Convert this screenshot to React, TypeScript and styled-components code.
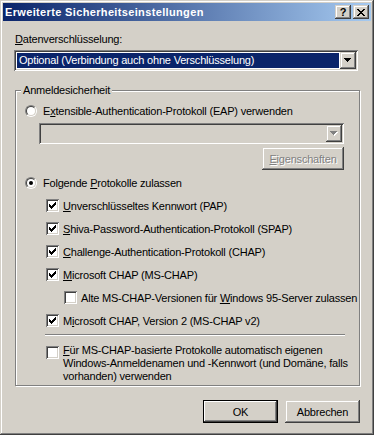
import React from "react";
import styled, { createGlobalStyle, css } from "styled-components";

const GlobalStyle = createGlobalStyle`
  html, body {
    margin: 0;
    padding: 0;
    background: #d4d0c8;
  }
  body {
    font-family: "Liberation Sans", Arial, sans-serif;
    font-size: 11px;
    letter-spacing: -0.2px;
    color: #000;
  }
  * { box-sizing: border-box; }
`;

const raised = css`
  box-shadow: inset -1px -1px #404040, inset 1px 1px #d4d0c8,
    inset -2px -2px #808080, inset 2px 2px #ffffff;
`;

const sunken = css`
  box-shadow: inset 1px 1px #808080, inset -1px -1px #ffffff,
    inset 2px 2px #404040, inset -2px -2px #d4d0c8;
`;

const Window = styled.div`
  width: 374px;
  height: 435px;
  padding: 3px;
  background: #d4d0c8;
  display: flex;
  flex-direction: column;
  ${raised}
`;

const TitleBar = styled.div`
  height: 18px;
  padding: 0 2px 0 2px;
  display: flex;
  align-items: center;
  justify-content: space-between;
  background: linear-gradient(to right, #0a246a, #a6caf0);
`;

const Title = styled.span`
  color: #fff;
  font-weight: bold;
  font-size: 11px;
  letter-spacing: 0.35px;
  white-space: nowrap;
`;

const CaptionButtons = styled.div`
  display: flex;
  gap: 2px;
`;

const CaptionButton = styled.div`
  width: 16px;
  height: 14px;
  background: #d4d0c8;
  display: flex;
  align-items: center;
  justify-content: center;
  font-weight: bold;
  font-size: 11px;
  line-height: 14px;
  letter-spacing: 0;
  ${raised}
`;

const Body = styled.div`
  flex: 1;
  padding: 12px 11px 0 12px;
  display: flex;
  flex-direction: column;
`;

const FieldLabel = styled.div`
  height: 13px;
  line-height: 13px;
  white-space: nowrap;
`;

const Combo = styled.div<{ $disabled?: boolean }>`
  height: 21px;
  padding: 2px;
  display: flex;
  background: ${({ $disabled }) => ($disabled ? "#d4d0c8" : "#fff")};
  ${sunken}
`;

const MainCombo = styled(Combo)`
  margin: 4px 2px 0 -1px;
`;

const ComboValue = styled.div<{ $selected?: boolean }>`
  flex: 1;
  margin: 1px;
  padding-left: 2px;
  line-height: 15px;
  white-space: nowrap;
  background: ${({ $selected }) => ($selected ? "#0a246a" : "transparent")};
  color: ${({ $selected }) => ($selected ? "#fff" : "#000")};
`;

const DropButton = styled.div`
  width: 16px;
  height: 17px;
  background: #d4d0c8;
  display: flex;
  align-items: center;
  justify-content: center;
  ${raised}
`;

const Group = styled.fieldset`
  margin: 13px 0 0 0;
  padding: 6px 9px 2px 9px;
  min-inline-size: 0;
  border: 1px solid #808080;
  box-shadow: inset 1px 1px #ffffff, 1px 1px #ffffff;
  display: flex;
  flex-direction: column;
`;

const Legend = styled.legend`
  margin-left: -4px;
  padding: 0 2px;
  line-height: 13px;
  background: #d4d0c8;
`;

const OptionRow = styled.label<{ $indent?: number; $height?: number; $gap?: number }>`
  height: ${({ $height }) => $height ?? 16}px;
  margin-left: ${({ $indent }) => $indent ?? 0}px;
  display: flex;
  align-items: center;
  gap: ${({ $gap }) => $gap ?? 6}px;
  white-space: nowrap;
`;

const RadioOuter = styled.span`
  width: 12px;
  height: 12px;
  flex: none;
  border-radius: 50%;
  border: 1px solid;
  border-color: #808080 #ffffff #ffffff #808080;
  display: flex;
`;

const RadioInner = styled.span`
  flex: 1;
  border-radius: 50%;
  border: 1px solid;
  border-color: #404040 #d4d0c8 #d4d0c8 #404040;
  background: #fff;
  display: flex;
  align-items: center;
  justify-content: center;
`;

const RadioDot = styled.span`
  width: 4px;
  height: 4px;
  border-radius: 50%;
  background: #000;
`;

const CheckBox = styled.span`
  width: 13px;
  height: 13px;
  flex: none;
  padding: 3px;
  background: #fff;
  display: flex;
  ${sunken}
`;

const EapOptions = styled.div`
  margin: 4px 0 0 14px;
  width: 305px;
  display: flex;
  flex-direction: column;
`;

const Button = styled.div<{ $default?: boolean; $disabled?: boolean }>`
  width: 75px;
  height: 23px;
  display: flex;
  align-items: center;
  justify-content: center;
  background: #d4d0c8;
  white-space: nowrap;
  ${raised}
  ${({ $default }) =>
    $default &&
    css`
      box-shadow: inset 1px 1px #000, inset -1px -1px #000,
        inset -2px -2px #404040, inset 2px 2px #ffffff,
        inset -3px -3px #808080;
    `}
  ${({ $disabled }) =>
    $disabled &&
    css`
      color: #808080;
      text-shadow: 1px 1px 0 #ffffff;
    `}
`;

const PropsButton = styled(Button)`
  width: 82px;
  margin-top: 3px;
  align-self: flex-end;
`;

const Spacer = styled.div<{ $h: number }>`
  height: ${({ $h }) => $h}px;
`;

const Separator = styled.div`
  margin: 2px 0 0 20px;
  width: 300px;
  height: 2px;
  border-top: 1px solid #808080;
  border-bottom: 1px solid #ffffff;
`;

const MultiRow = styled.label`
  margin: 8px 0 0 21px;
  display: flex;
  align-items: flex-start;
  gap: 4px;
`;

const MultiText = styled.span`
  line-height: 13px;
  white-space: nowrap;
`;

const CheckSlot = styled.span`
  margin-top: 2px;
  display: flex;
`;

const ButtonRow = styled.div`
  margin-top: 14px;
  display: flex;
  justify-content: flex-end;
  gap: 7px;
`;

const Arrow = ({ disabled }: { disabled?: boolean }) => (
  <svg width="8" height="5" viewBox="0 0 8 5" shapeRendering="crispEdges">
    {disabled && (
      <path
        d="M1 1h7v1H1z M2 2h5v1H2z M3 3h3v1H3z M4 4h1v1H4z"
        fill="#ffffff"
      />
    )}
    <path
      d="M0 0h7v1H0z M1 1h5v1H1z M2 2h3v1H2z M3 3h1v1H3z"
      fill={disabled ? "#808080" : "#000"}
    />
  </svg>
);

const CloseGlyph = () => (
  <svg width="8" height="7" viewBox="0 0 8 7" shapeRendering="crispEdges">
    <path
      d="M0 0h2v1H0z M6 0h2v1H6z M1 1h2v1H1z M5 1h2v1H5z M2 2h4v1H2z M3 3h2v1H3z M2 4h4v1H2z M1 5h2v1H1z M5 5h2v1H5z M0 6h2v1H0z M6 6h2v1H6z"
      fill="#000"
    />
  </svg>
);

const Check = ({ checked }: { checked: boolean }) => (
  <CheckBox>
    {checked && (
      <svg width="7" height="7" viewBox="0 0 7 7" shapeRendering="crispEdges">
        <path
          d="M0 2h1v3H0z M1 3h1v3H1z M2 4h1v3H2z M3 3h1v3H3z M4 2h1v3H4z M5 1h1v3H5z M6 0h1v3H6z"
          fill="#000"
        />
      </svg>
    )}
  </CheckBox>
);

const Radio = ({ checked }: { checked: boolean }) => (
  <RadioOuter>
    <RadioInner>{checked && <RadioDot />}</RadioInner>
  </RadioOuter>
);

const protocols = [
  { key: "pap", pre: "", acc: "U", post: "nverschlüsseltes Kennwort (PAP)", checked: true, indent: 21 },
  { key: "spap", pre: "", acc: "S", post: "hiva-Password-Authentication-Protokoll (SPAP)", checked: true, indent: 21 },
  { key: "chap", pre: "", acc: "C", post: "hallenge-Authentication-Protokoll (CHAP)", checked: true, indent: 21 },
  { key: "ms", pre: "", acc: "M", post: "icrosoft CHAP (MS-CHAP)", checked: true, indent: 21 },
  { key: "old", pre: "Alte MS-CHAP-Versionen für ", acc: "W", post: "indows 95-Server zulassen", checked: false, indent: 39 },
  { key: "v2", pre: "M", acc: "i", post: "crosoft CHAP, Version 2 (MS-CHAP v2)", checked: true, indent: 21 },
];

export default function App() {
  return (
    <>
      <GlobalStyle />
      <Window>
        <TitleBar>
          <Title>Erweiterte Sicherheitseinstellungen</Title>
          <CaptionButtons>
            <CaptionButton>?</CaptionButton>
            <CaptionButton>
              <CloseGlyph />
            </CaptionButton>
          </CaptionButtons>
        </TitleBar>

        <Body>
          <FieldLabel>
            <u>D</u>atenverschlüsselung:
          </FieldLabel>
          <MainCombo>
            <ComboValue $selected>
              Optional (Verbindung auch ohne Verschlüsselung)
            </ComboValue>
            <DropButton>
              <Arrow />
            </DropButton>
          </MainCombo>

          <Group>
            <Legend>Anmeldesicherheit</Legend>
            <OptionRow>
              <Radio checked={false} />
              <span>
                E<u>x</u>tensible-Authentication-Protokoll (EAP) verwenden
              </span>
            </OptionRow>
            <EapOptions>
              <Combo $disabled>
                <ComboValue />
                <DropButton>
                  <Arrow disabled />
                </DropButton>
              </Combo>
              <PropsButton $disabled>
                <span>
                  <u>E</u>igenschaften
                </span>
              </PropsButton>
            </EapOptions>

            <Spacer $h={5} />
            <OptionRow>
              <Radio checked />
              <span>
                Folgende <u>P</u>rotokolle zulassen
              </span>
            </OptionRow>
            <Spacer $h={3} />
            {protocols.map((p) => (
              <OptionRow key={p.key} $indent={p.indent} $height={23} $gap={4}>
                <Check checked={p.checked} />
                <span>
                  {p.pre}
                  <u>{p.acc}</u>
                  {p.post}
                </span>
              </OptionRow>
            ))}
            <Separator />
            <MultiRow>
              <CheckSlot>
                <Check checked={false} />
              </CheckSlot>
              <MultiText>
                <u>F</u>ür MS-CHAP-basierte Protokolle automatisch eigenen
                <br />
                Windows-Anmeldenamen und -Kennwort (und Domäne, falls
                <br />
                vorhanden) verwenden
              </MultiText>
            </MultiRow>
          </Group>

          <ButtonRow>
            <Button $default>OK</Button>
            <Button>Abbrechen</Button>
          </ButtonRow>
        </Body>
      </Window>
    </>
  );
}
